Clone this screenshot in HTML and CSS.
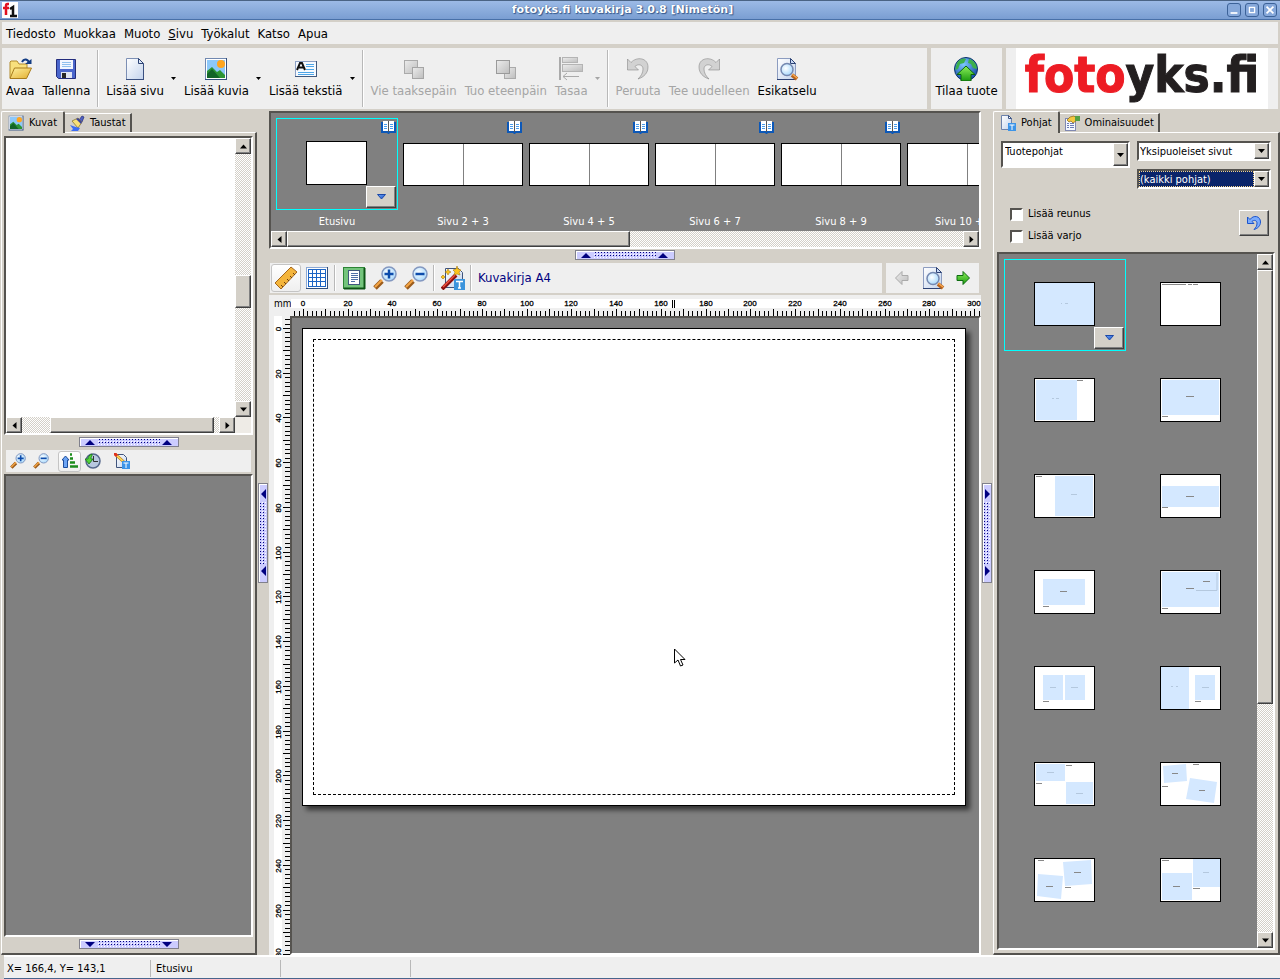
FILE: index.html
```html
<!DOCTYPE html>
<html lang="fi">
<head>
    <meta charset="UTF-8">
    <meta name="viewport" content="width=device-width, initial-scale=1.0">
    <title>fotoyks.fi kuvakirja 3.0.8 [Nimetön]</title>
    <link rel="stylesheet" href="styles.css">
</head>
<body>

    <!-- Icon set -->
    <svg class="defs" width="0" height="0" aria-hidden="true">
        <defs>
            <linearGradient id="g-blue" x1="0" y1="0" x2="1" y2="1"><stop offset="0" stop-color="#6ca8fc"/><stop offset="1" stop-color="#1c4cc0"/></linearGradient>
            <linearGradient id="g-page" x1="0" y1="0" x2="1" y2="1"><stop offset="0" stop-color="#ffffff"/><stop offset="1" stop-color="#c3d3ec"/></linearGradient>
            <linearGradient id="g-grey" x1="0" y1="0" x2="1" y2="1"><stop offset="0" stop-color="#ececec"/><stop offset="1" stop-color="#bdbdbd"/></linearGradient>
            <linearGradient id="g-green" x1="0" y1="0" x2="0" y2="1"><stop offset="0" stop-color="#8cf05a"/><stop offset="1" stop-color="#1c9a10"/></linearGradient>
            <linearGradient id="g-folder" x1="0" y1="0" x2="1" y2="1"><stop offset="0" stop-color="#fff2a0"/><stop offset="1" stop-color="#e2ae30"/></linearGradient>
            <radialGradient id="g-globe" cx=".4" cy=".3" r=".8"><stop offset="0" stop-color="#7cc8ff"/><stop offset="1" stop-color="#0a3c9c"/></radialGradient>
            <radialGradient id="g-lens" cx=".4" cy=".4" r=".7"><stop offset="0" stop-color="#ffffff"/><stop offset="1" stop-color="#9cd4fc"/></radialGradient>
            <pattern id="p-dots" width="3" height="3" patternUnits="userSpaceOnUse"><rect width="1" height="1" fill="#fff"/><rect x="1" y="1" width="1" height="1" fill="#000080"/></pattern>
        </defs>
        <symbol id="i-open" viewBox="0 0 24 24">
            <path d="M2 21V5l1-1h6l2 3h8v5" fill="#f8e07c" stroke="#b08a2c"/>
            <path d="M2 21.500l4.500-10.500h17l-5 10.500z" fill="url(#g-folder)" stroke="#a87c1c"/>
            <path d="M14 5c2-4 6-3 7 1" fill="none" stroke="#123c84" stroke-width="2"/>
            <path d="M17.500 5H24V0z" fill="#123c84" transform="translate(-.5 2)"/>
        </symbol>
        <symbol id="i-save" viewBox="0 0 24 24">
            <path d="M2.500 2.500h19v19h-17l-2-2z" fill="#4a66cc" stroke="#232c7c"/>
            <rect x="6" y="3" width="13" height="9" fill="#f2f6ff"/>
            <path d="M8 5.500h9M8 7.500h9M8 9.500h9" stroke="#8fc0ee"/>
            <rect x="7" y="15" width="11" height="6" fill="#dfe4f4"/>
            <rect x="8" y="16" width="4" height="5" fill="#262626"/>
        </symbol>
        <symbol id="i-page" viewBox="0 0 24 24">
            <path d="M3.500 1.500h12l5 5v16h-17z" fill="url(#g-page)" stroke="#7c8fb4"/>
            <path d="M15.500 1.500v5h5z" fill="#dce8fa" stroke="#2c4274"/>
            <path d="M3 22.500h18M20.500 7v16" stroke="#3a5080" stroke-width="1"/>
        </symbol>
        <symbol id="i-image" viewBox="0 0 24 24">
            <rect x="1.500" y="1.500" width="21" height="21" fill="#fff" stroke="#7088b0"/>
            <rect x="3" y="3" width="18" height="18" fill="#8cc8fa"/>
            <circle cx="17" cy="7" r="4" fill="#ffa51e"/>
            <path d="M3 14l5-4 5 5 3-2 5 5v3H3z" fill="#2c9434"/>
            <path d="M3 17l5-5 8 9H3z" fill="#126428"/>
            <path d="M1 22.500h22M22.500 1v22" stroke="#34507c"/>
        </symbol>
        <symbol id="i-text" viewBox="0 0 24 24">
            <rect x="1.500" y="4.500" width="21" height="15" fill="#f6faff" stroke="#8ca0c4"/>
            <path d="M3 13l3-7h2l3 7M5 10.500h5" fill="none" stroke="#111" stroke-width="2"/>
            <path d="M12 7.500h8M12 9.500h8M12 12.500h8M4 15.500h16M4 17.500h16" stroke="#4ea6e8"/>
            <path d="M1 19.500h22M22.500 4v16" stroke="#40587c"/>
        </symbol>
        <symbol id="i-back" viewBox="0 0 24 24">
            <rect x="2.500" y="3.500" width="13" height="13" fill="url(#g-grey)" stroke="#aaa"/>
            <rect x="10.500" y="10.500" width="11" height="11" fill="url(#g-grey)" stroke="#a5a5a5"/>
        </symbol>
        <symbol id="i-front" viewBox="0 0 24 24">
            <rect x="10.500" y="10.500" width="11" height="11" fill="url(#g-grey)" stroke="#aaa"/>
            <rect x="2.500" y="3.500" width="13" height="13" fill="url(#g-grey)" stroke="#9a9a9a"/>
        </symbol>
        <symbol id="i-align" viewBox="0 0 24 24">
            <path d="M1 0v23" stroke="#aaa" stroke-width="2"/>
            <rect x="3.500" y=".5" width="15" height="5" fill="url(#g-grey)" stroke="#b4b4b4"/>
            <rect x="3.500" y="7.500" width="20" height="7" fill="url(#g-grey)" stroke="#b4b4b4"/>
            <path d="M4 19.500h16M8 16l-4 3.500L8 23" fill="none" stroke="#aaa"/>
        </symbol>
        <symbol id="i-undo" viewBox="0 0 24 24">
            <path d="M1.500 2v11h11L9 9.500c3-3 8-2 8 2.500 0 4-2 7-5 10 6-2 10-6 10-12C22 1 11-1 5 5.500z" fill="currentColor" stroke="#777" stroke-opacity=".5"/>
        </symbol>
        <symbol id="i-reset" viewBox="0 0 16 16">
            <path d="M1.500 2v6.500H8L6 6.500c2-2 5-1 5 1.500 0 3-1 4.500-3 6.500 4-1 6.500-4 6.500-7.500C14.500 1 7.500-.5 4 4.500z" fill="#7cacfc" stroke="#1c54cc"/>
        </symbol>
        <symbol id="i-redo" viewBox="0 0 24 24">
            <path d="M22.500 2v11h-11L15 9.500c-3-3-8-2-8 2.500 0 4 2 7 5 10-6-2-10-6-10-12C2 1 13-1 19 5.500z" fill="currentColor" stroke="#777" stroke-opacity=".5"/>
        </symbol>
        <symbol id="i-preview" viewBox="0 0 24 24">
            <path d="M2.500 1.500h13l5 5v16h-18z" fill="url(#g-page)" stroke="#8c9cc0"/>
            <path d="M15.500 1.500v5h5z" fill="#c8d8f4" stroke="#2c4274"/>
            <path d="M2 22.500h18" stroke="#2c4274"/>
            <path d="M17 18l5 4" stroke="#b8641c" stroke-width="4"/>
            <path d="M17 17l5 4" stroke="#f8a850" stroke-width="1.500"/>
            <circle cx="12" cy="12.500" r="6" fill="url(#g-lens)" stroke="#7488b0" stroke-width="1.500"/>
        </symbol>
        <symbol id="i-globe" viewBox="0 0 24 24">
            <circle cx="12" cy="12" r="11.500" fill="url(#g-globe)" stroke="#083068"/>
            <path d="M3 6c3-5 8-5 9-4l-2 4-4 1-2 5-3 1zM15 2c5 1 8 6 8 10l-4-1-2-4-3-1z" fill="#3cb04c"/>
            <path d="M12 9l9 8.500h-4V24H7v-6.500H3z" fill="url(#g-green)" stroke="#0c640c"/>
        </symbol>
        <symbol id="i-brush" viewBox="0 0 16 16">
            <path d="M10 5l3-4 2 1-2 5z" fill="#5060c4" stroke="#222c74" stroke-width=".7"/>
            <path d="M3 6l6-3 4 4-4 6z" fill="#f8e078" stroke="#7c6c24" stroke-width=".7"/>
            <path d="M7 4l5 5 1-2-4-4z" fill="#3c449c"/>
            <path d="M1 10c3 1 5 2 10 3l-2 3H2l2-2z" fill="#3c6cf4"/>
        </symbol>
        <symbol id="i-template" viewBox="0 0 16 16">
            <path d="M1.500 .5h7l3 3v11h-10z" fill="url(#g-page)" stroke="#6c82ac"/>
            <path d="M8.500 .5v3h3z" fill="#fff" stroke="#3c5484"/>
            <rect x="8" y="8" width="8" height="8" fill="#3c94e8"/>
            <path d="M9.500 10h5M12 10v5" stroke="#fff"/>
        </symbol>
        <symbol id="i-props" viewBox="0 0 16 16">
            <rect x="1.500" y="3.500" width="10" height="12" fill="#f4f8ff" stroke="#8088b0"/>
            <path d="M3 8.500h2M3 10.500h2M3 12.500h2M6 8.500h4M6 10.500h4M6 12.500h4" stroke="#6c7cb4"/>
            <path d="M3 5l3-3 4-1 2 2v3L9 8 7 6 5 7z" fill="#f4c840" stroke="#866414" stroke-width=".7"/>
            <rect x="11" y="1" width="5" height="5" fill="#54a044"/>
        </symbol>
        <symbol id="i-book" viewBox="0 0 15 13">
            <path d="M0 1h15v11H9l-1 1H7l-1-1H0z" fill="#0c58b8"/>
            <path d="M2 0h5v10H2zM8 0h5v10H8z" fill="#fff"/>
            <path d="M7.500 0v11" stroke="#555"/>
            <path d="M3 3.500h3M3 5.500h3M3 7.500h3M9 3.500h3M9 5.500h3M9 7.500h3" stroke="#4a9cec"/>
        </symbol>
        <symbol id="i-ruler" viewBox="0 0 24 24">
            <path d="M1 17L17 1l6 5L7 23z" fill="#f4b53c" stroke="#a4661c"/>
            <path d="M9 21l-2-2M12 18l-2-2M15 15l-2-2M18 12l-2-2M21 9l-2-2" stroke="#6c4010"/>
        </symbol>
        <symbol id="i-grid" viewBox="0 0 24 24">
            <rect x="1.500" y="1.500" width="21" height="21" fill="#fff" stroke="#8ca8d4"/>
            <path d="M3 3.500h18M3 7.500h18M3 11.500h18M3 15.500h18M3 20.500h18M3.500 3v18M7.500 3v18M11.500 3v18M15.500 3v18M20.500 3v18" stroke="#1c64c4"/>
            <path d="M1 22.500h22M22.500 1v22" stroke="#34507c"/>
        </symbol>
        <symbol id="i-fit" viewBox="0 0 24 24">
            <rect x="1.500" y="1.500" width="21" height="21" fill="#74c47c" stroke="#2c8434"/>
            <path d="M2 22.500h21M22.500 2v21" stroke="#0c5414" stroke-width="2"/>
            <rect x="6.500" y="4.500" width="11" height="14" fill="#fff" stroke="#40587c"/>
            <path d="M9 7.500h7M9 9.500h7M9 11.500h7M9 13.500h7M9 15.500h4" stroke="#5070a8"/>
        </symbol>
        <symbol id="i-zoomin" viewBox="0 0 24 24">
            <path d="M9 15l-7 7" stroke="#9c5c1c" stroke-width="5"/>
            <path d="M9 14l-7 7" stroke="#f4a444" stroke-width="2"/>
            <circle cx="16" cy="8" r="7" fill="url(#g-lens)" stroke="#8498c0" stroke-width="1.500"/>
            <path d="M11.500 8h9M16 3.500v9" stroke="#0c4cac" stroke-width="2.500"/>
        </symbol>
        <symbol id="i-zoomout" viewBox="0 0 24 24">
            <path d="M9 15l-7 7" stroke="#9c5c1c" stroke-width="5"/>
            <path d="M9 14l-7 7" stroke="#f4a444" stroke-width="2"/>
            <circle cx="16" cy="8" r="7" fill="url(#g-lens)" stroke="#8498c0" stroke-width="1.500"/>
            <path d="M11.500 8h9" stroke="#0c4cac" stroke-width="2.500"/>
        </symbol>
        <symbol id="i-wand" viewBox="0 0 24 24">
            <path d="M4.500 2.500h13l4 4v15h-17z" fill="url(#g-page)" stroke="#40547c"/>
            <path d="M1 23L15 9" stroke="#8c1010" stroke-width="4"/>
            <path d="M2 21L14 9" stroke="#f05440" stroke-width="1.500"/>
            <path d="M16 0l1 3 3 1-2 2 1 3-3-1-3 1 1-3-2-2 3-1zM7 3l1 2 2 1-2 1-1 2-1-2-2-1 2-1zM2 9l1 1 1 1-2 2-2-2z" fill="#fcc41c" stroke="#a87c10" stroke-width=".6"/>
            <rect x="13" y="13" width="11" height="11" fill="#3c94dc"/>
            <path d="M15 15.500h7M18.500 15v7M17 22h3" stroke="#fff" stroke-width="1.500"/>
        </symbol>
        <symbol id="i-prev" viewBox="0 0 24 24">
            <path d="M5.500 12L12 5.500v4h6v5h-6v4z" fill="url(#g-grey)" stroke="#aaa"/>
        </symbol>
        <symbol id="i-next" viewBox="0 0 24 24">
            <path d="M18.500 12L12 5.500v4H6v5h6v4z" fill="url(#g-green)" stroke="#0c6c10"/>
        </symbol>
        <symbol id="i-sort" viewBox="0 0 16 16">
            <path d="M3.500 3L0 7h1.500v7.500h4V7H7z" fill="#6ca4f4" stroke="#1c4c9c"/>
            <path d="M8 1.500h2M8 5.500h3M8 9.500h5M8 13.500h8" stroke="#1c8c1c" stroke-width="2.500"/>
        </symbol>
        <symbol id="i-clock" viewBox="0 0 16 16">
            <circle cx="8" cy="8" r="7" fill="#b8c8e0" stroke="#56688c" stroke-width="1.500"/>
            <path d="M8.500 3v5.500H13" fill="none" stroke="#333"/>
            <path d="M7 1C4 2 3 4 3 6H0l4 5 4-5H6c0-1 0-2 1-3z" fill="#54d43c" stroke="#147414" stroke-width=".8"/>
        </symbol>
        <symbol id="i-edit" viewBox="0 0 16 16">
            <path d="M2.500 1.500h7l3 3v10h-10z" fill="url(#g-page)" stroke="#40547c"/>
            <path d="M1 1l10 9" stroke="#c88420" stroke-width="3"/>
            <path d="M1 1l10 9" stroke="#fce05c" stroke-width="1.500"/>
            <path d="M0 0l3 3" stroke="#e0301c" stroke-width="3"/>
            <rect x="8" y="8" width="8" height="8" fill="#3c94e8"/>
            <path d="M9.500 10h5M12 10v5" stroke="#fff"/>
        </symbol>
        <symbol id="i-down" viewBox="0 0 9 6">
            <path d="M.5 .5h8L4.500 5z" fill="url(#g-blue)" stroke="#1c48a8"/>
        </symbol>
        <symbol id="i-drop" viewBox="0 0 5 3"><path d="M0 0h5L2.500 3z" fill="currentColor"/></symbol>
        <symbol id="a-up" viewBox="0 0 7 4"><path d="M0 4h7L3.500 0z"/></symbol>
        <symbol id="a-down" viewBox="0 0 7 4"><path d="M0 0h7L3.500 4z"/></symbol>
        <symbol id="a-left" viewBox="0 0 4 7"><path d="M4 0v7L0 3.500z"/></symbol>
        <symbol id="a-right" viewBox="0 0 4 7"><path d="M0 0v7l4-3.500z"/></symbol>
        <symbol id="h-up" viewBox="0 0 98 8">
            <path d="M5 7h10L10 2zM82 7h10L87 2z" fill="#000080"/><rect x="18" y="1" width="62" height="6" fill="url(#p-dots)"/>
        </symbol>
        <symbol id="h-down" viewBox="0 0 98 8">
            <path d="M5 2h10L10 7zM82 2h10L87 7z" fill="#000080"/><rect x="18" y="1" width="62" height="6" fill="url(#p-dots)"/>
        </symbol>
        <symbol id="h-left" viewBox="0 0 8 98">
            <path d="M7 5v10L2 10zM7 82v10L2 87z" fill="#000080"/><rect x="1" y="18" width="6" height="62" fill="url(#p-dots)"/>
        </symbol>
        <symbol id="h-right" viewBox="0 0 8 98">
            <path d="M2 5v10l5-5zM2 82v10l5-5z" fill="#000080"/><rect x="1" y="18" width="6" height="62" fill="url(#p-dots)"/>
        </symbol>
    </svg>

    <!-- Title bar -->
    <header class="titlebar">
        <svg class="app-icon" viewBox="0 0 16 16">
            <rect width="16" height="16" fill="#fff"/>
            <path d="M7 2H5.500Q4 2 4 4v9M1 6h6" fill="none" stroke="#e01020" stroke-width="2.500"/>
            <path d="M8 7l3-2v9M8 14h7" fill="none" stroke="#111" stroke-width="2.500"/>
        </svg>
        <h1>fotoyks.fi kuvakirja 3.0.8 [Nimetön]</h1>
        <div class="window-buttons">
            <button aria-label="Pienennä"><svg viewBox="0 0 14 14"><path d="M3 10.500h8" stroke="#fff" stroke-width="2"/></svg></button>
            <button aria-label="Suurenna"><svg viewBox="0 0 14 14"><rect x="4" y="4" width="6" height="6" fill="none" stroke="#fff" stroke-width="1.500"/></svg></button>
            <button aria-label="Sulje"><svg viewBox="0 0 14 14"><path d="M3 3l8 8M11 3l-8 8" stroke="#fff" stroke-width="2"/></svg></button>
        </div>
    </header>

    <!-- Menu -->
    <nav class="menubar">
        <button>Tiedosto</button>
        <button>Muokkaa</button>
        <button>Muoto</button>
        <button><u>S</u>ivu</button>
        <button>Työkalut</button>
        <button>Katso</button>
        <button>Apua</button>
    </nav>

    <!-- Main toolbar -->
    <div class="toolbar-row">
        <div class="toolbar main-tools">
            <button class="tool"><svg><use href="#i-open"/></svg>Avaa</button>
            <button class="tool"><svg><use href="#i-save"/></svg>Tallenna</button>
            <span class="sep"></span>
            <button class="tool"><svg><use href="#i-page"/></svg>Lisää sivu</button>
            <button class="drop" aria-label="Lisää sivu, valikko"><svg><use href="#i-drop"/></svg></button>
            <button class="tool"><svg><use href="#i-image"/></svg>Lisää kuvia</button>
            <button class="drop" aria-label="Lisää kuvia, valikko"><svg><use href="#i-drop"/></svg></button>
            <button class="tool"><svg><use href="#i-text"/></svg>Lisää tekstiä</button>
            <button class="drop" aria-label="Lisää tekstiä, valikko"><svg><use href="#i-drop"/></svg></button>
            <span class="sep"></span>
            <button class="tool" disabled><svg><use href="#i-back"/></svg>Vie taaksepäin</button>
            <button class="tool" disabled><svg><use href="#i-front"/></svg>Tuo eteenpäin</button>
            <button class="tool" disabled><svg><use href="#i-align"/></svg>Tasaa</button>
            <button class="drop" disabled aria-label="Tasaa, valikko"><svg><use href="#i-drop"/></svg></button>
            <span class="sep"></span>
            <button class="tool" disabled><svg><use href="#i-undo"/></svg>Peruuta</button>
            <button class="tool" disabled><svg><use href="#i-redo"/></svg>Tee uudelleen</button>
            <button class="tool"><svg><use href="#i-preview"/></svg>Esikatselu</button>
        </div>
        <div class="toolbar order">
            <button class="tool"><svg><use href="#i-globe"/></svg>Tilaa tuote</button>
        </div>
        <div class="toolbar brand">
            <div class="logo"><span>foto</span>yks.fi</div>
        </div>
    </div>

    <main class="workspace">

        <!-- Left: pictures -->
        <aside class="left">
            <div class="tabs">
                <button class="tab active"><svg><use href="#i-image"/></svg>Kuvat</button>
                <button class="tab"><svg><use href="#i-brush"/></svg>Taustat</button>
            </div>
            <div class="tab-page">
                <div class="sunken folder-list">
                    <div class="folder-body"></div>
                    <div class="scroll vertical">
                        <button aria-label="Ylös"><svg><use href="#a-up"/></svg></button>
                        <span class="track folders-before"></span><span class="thumb folders-thumb"></span><span class="track"></span>
                        <button aria-label="Alas"><svg><use href="#a-down"/></svg></button>
                    </div>
                    <div class="scroll">
                        <button aria-label="Vasemmalle"><svg><use href="#a-left"/></svg></button>
                        <span class="track path-before"></span><span class="thumb path-thumb"></span><span class="track"></span>
                        <button aria-label="Oikealle"><svg><use href="#a-right"/></svg></button>
                    </div>
                    <div class="corner"></div>
                </div>
                <button class="handle" aria-label="Piilota kansiot"><svg><use href="#h-up"/></svg></button>
                <div class="small-tools">
                    <button aria-label="Suurenna"><svg><use href="#i-zoomin"/></svg></button>
                    <button aria-label="Pienennä"><svg><use href="#i-zoomout"/></svg></button>
                    <span class="space"></span>
                    <button class="pressed" aria-label="Järjestä nimen mukaan"><svg><use href="#i-sort"/></svg></button>
                    <button aria-label="Järjestä ajan mukaan"><svg><use href="#i-clock"/></svg></button>
                    <span class="space"></span>
                    <button aria-label="Muokkaa"><svg><use href="#i-edit"/></svg></button>
                </div>
                <div class="sunken image-list"></div>
                <button class="handle" aria-label="Piilota kuvat"><svg><use href="#h-down"/></svg></button>
            </div>
        </aside>

        <div class="splitter"><button class="handle upright" aria-label="Piilota vasen paneeli"><svg><use href="#h-left"/></svg></button></div>

        <!-- Center: pages and canvas -->
        <section class="center">
            <div class="sunken page-strip">
                <div class="pages">
                    <div class="page-item">
                        <div class="slot selected">
                            <svg class="book"><use href="#i-book"/></svg>
                            <span class="sheet single"></span>
                            <button class="more" aria-label="Sivun valikko"><svg><use href="#i-down"/></svg></button>
                        </div>
                        <p>Etusivu</p>
                    </div>
                    <div class="page-item">
                        <div class="slot"><svg class="book"><use href="#i-book"/></svg><span class="sheet spread"></span></div>
                        <p>Sivu 2 + 3</p>
                    </div>
                    <div class="page-item">
                        <div class="slot"><svg class="book"><use href="#i-book"/></svg><span class="sheet spread"></span></div>
                        <p>Sivu 4 + 5</p>
                    </div>
                    <div class="page-item">
                        <div class="slot"><svg class="book"><use href="#i-book"/></svg><span class="sheet spread"></span></div>
                        <p>Sivu 6 + 7</p>
                    </div>
                    <div class="page-item">
                        <div class="slot"><svg class="book"><use href="#i-book"/></svg><span class="sheet spread"></span></div>
                        <p>Sivu 8 + 9</p>
                    </div>
                    <div class="page-item">
                        <div class="slot"><svg class="book"><use href="#i-book"/></svg><span class="sheet spread"></span></div>
                        <p>Sivu 10 + 11</p>
                    </div>
                </div>
                <div class="scroll">
                    <button aria-label="Vasemmalle"><svg><use href="#a-left"/></svg></button>
                    <span class="thumb pages-thumb"></span><span class="track"></span>
                    <button aria-label="Oikealle"><svg><use href="#a-right"/></svg></button>
                </div>
            </div>
            <button class="handle" aria-label="Piilota sivut"><svg><use href="#h-up"/></svg></button>

            <div class="view-row">
                <div class="view-tools">
                    <button class="pressed" aria-label="Viivain"><svg><use href="#i-ruler"/></svg></button>
                    <button aria-label="Ruudukko"><svg><use href="#i-grid"/></svg></button>
                    <span class="sep"></span>
                    <button aria-label="Koko sivu"><svg><use href="#i-fit"/></svg></button>
                    <button aria-label="Lähennä"><svg><use href="#i-zoomin"/></svg></button>
                    <button aria-label="Loitonna"><svg><use href="#i-zoomout"/></svg></button>
                    <span class="sep"></span>
                    <button aria-label="Automaattinen taitto"><svg><use href="#i-wand"/></svg></button>
                    <span class="sep"></span>
                    <span class="product">Kuvakirja A4</span>
                </div>
                <div class="view-tools page-nav">
                    <button disabled aria-label="Edellinen sivu"><svg><use href="#i-prev"/></svg></button>
                    <button aria-label="Esikatselu"><svg><use href="#i-preview"/></svg></button>
                    <button aria-label="Seuraava sivu"><svg><use href="#i-next"/></svg></button>
                </div>
            </div>

            <div class="editor">
                <div class="unit">mm</div>
                <svg class="ruler" id="ruler-x"></svg>
                <svg class="ruler" id="ruler-y"></svg>
                <div class="canvas">
                    <div class="paper">
                        <div class="margin"></div>
                        <svg class="cursor" viewBox="0 0 12 19"><path d="M.5 1v14l3.500-3 2.500 6 2.500-1-2.500-5.500h4.500z" fill="#fff" stroke="#000"/></svg>
                    </div>
                </div>
            </div>
        </section>

        <div class="splitter"><button class="handle upright" aria-label="Piilota oikea paneeli"><svg><use href="#h-right"/></svg></button></div>

        <!-- Right: templates -->
        <aside class="right">
            <div class="tabs">
                <button class="tab active"><svg><use href="#i-template"/></svg>Pohjat</button>
                <button class="tab"><svg><use href="#i-props"/></svg>Ominaisuudet</button>
            </div>
            <div class="tab-page">
                <div class="filters">
                    <div class="combo tall">
                        <select aria-label="Pohjaryhmä"><option>Tuotepohjat</option></select>
                        <span class="combo-arrow"><svg><use href="#a-down"/></svg></span>
                    </div>
                    <div class="combo-stack">
                        <div class="combo">
                            <select aria-label="Sivutyyppi"><option>Yksipuoleiset sivut</option></select>
                            <span class="combo-arrow"><svg><use href="#a-down"/></svg></span>
                        </div>
                        <div class="combo current">
                            <select aria-label="Pohjat"><option>(kaikki pohjat)</option></select>
                            <span class="combo-arrow"><svg><use href="#a-down"/></svg></span>
                        </div>
                    </div>
                </div>
                <div class="options">
                    <div>
                        <label><input type="checkbox">Lisää reunus</label>
                        <label><input type="checkbox">Lisää varjo</label>
                    </div>
                    <button class="reset" aria-label="Palauta"><svg><use href="#i-reset"/></svg></button>
                </div>
                <div class="sunken template-list">
                    <div class="templates">
                        <div class="slot selected">
                            <svg class="tpl" viewBox="0 0 59 42"><rect class="pic" width="59" height="42"/><path class="faint" d="M26 20.500h1M30 20.500h3"/></svg>
                            <button class="more" aria-label="Pohjan valikko"><svg><use href="#i-down"/></svg></button>
                        </div>
                        <div class="slot"><svg class="tpl" viewBox="0 0 59 42"><path class="txt" d="M1 1.500h24M27 1.500h4M32 1.500h5"/></svg></div>
                        <div class="slot"><svg class="tpl" viewBox="0 0 59 42"><rect class="pic" x="1" y="1" width="41" height="40"/><path class="txt" d="M42 1.500h6"/><path class="faint" d="M17 19.500h2M21 19.500h3"/></svg></div>
                        <div class="slot"><svg class="tpl" viewBox="0 0 59 42"><rect class="pic" x="1" y="1" width="57" height="35"/><path class="txt" d="M25 17.500h8M1 37.500h6"/></svg></div>
                        <div class="slot"><svg class="tpl" viewBox="0 0 59 42"><rect class="pic" x="20" y="1" width="38" height="40"/><path class="txt" d="M1 1.500h6"/><path class="faint" d="M36 19.500h6"/></svg></div>
                        <div class="slot"><svg class="tpl" viewBox="0 0 59 42"><rect class="pic" x="1" y="11" width="57" height="21"/><path class="txt" d="M25 21.500h8M1 32.500h6"/></svg></div>
                        <div class="slot"><svg class="tpl" viewBox="0 0 59 42"><rect class="pic" x="8" y="8" width="42" height="26"/><path class="txt" d="M25 20.500h7M8 35.500h6"/></svg></div>
                        <div class="slot"><svg class="tpl" viewBox="0 0 59 42"><rect class="pic" x="1" y="1" width="57" height="35"/><path class="faint" d="M35 19.500h21V2"/><path class="txt" d="M25 17.500h8M42 10.500h7M1 37.500h6"/></svg></div>
                        <div class="slot"><svg class="tpl" viewBox="0 0 59 42"><rect class="pic" x="8" y="8" width="20" height="25"/><rect class="pic" x="30" y="8" width="20" height="25"/><path class="faint" d="M15 20.500h6M36 20.500h7"/><path class="txt" d="M8 34.500h6"/></svg></div>
                        <div class="slot"><svg class="tpl" viewBox="0 0 59 42"><rect class="pic" width="28" height="42"/><rect class="pic" x="34" y="8" width="20" height="25"/><path class="faint" d="M10 19.500h2M15 19.500h2M41 20.500h7"/><path class="txt" d="M34 34.500h6"/></svg></div>
                        <div class="slot"><svg class="tpl" viewBox="0 0 59 42"><rect class="pic" x="1" y="1" width="29" height="17"/><rect class="pic" x="31" y="19" width="27" height="22"/><path class="faint" d="M12 9.500h7M41 30.500h7"/><path class="txt" d="M31 2.500h6M1 20.500h6"/></svg></div>
                        <div class="slot"><svg class="tpl" viewBox="0 0 59 42"><path class="pic" d="M2 3l23-2 1 17-23 2zM29 15l27 4-3 21-28-4z"/><path class="txt" d="M32 1.500h6M11 10.500h6M1 23.500h6M38 27.500h6"/></svg></div>
                        <div class="slot"><svg class="tpl" viewBox="0 0 59 42"><path class="pic" d="M28 3l28-2 1 24-27 2zM3 15l25 2-2 23-24-3z"/><path class="txt" d="M3 1.500h6M39 13.500h7M11 27.500h7M30 28.500h6"/></svg></div>
                        <div class="slot"><svg class="tpl" viewBox="0 0 59 42"><rect class="pic" x="1" y="14" width="30" height="27"/><rect class="pic" x="32" width="27" height="28"/><path class="faint" d="M42 13.500h6"/><path class="txt" d="M1 1.500h7M12 27.500h7M32 29.500h7"/></svg></div>
                    </div>
                    <div class="scroll vertical">
                        <button aria-label="Ylös"><svg><use href="#a-up"/></svg></button>
                        <span class="thumb templates-thumb"></span><span class="track"></span>
                        <button aria-label="Alas"><svg><use href="#a-down"/></svg></button>
                    </div>
                </div>
            </div>
        </aside>
    </main>

    <!-- Status bar -->
    <footer class="statusbar">
        <span class="cell wide">X= 166,4, Y= 143,1</span>
        <span class="cell">Etusivu</span>
        <span class="cell"></span>
        <span class="rest"></span>
    </footer>

    <script src="rulers.js"></script>
</body>
</html>
```

FILE: styles.css
```css
* {
    box-sizing: border-box;
}

body {
    margin: 0;
    height: 100vh;
    display: flex;
    flex-direction: column;
    overflow: hidden;
    background-color: #d4d0c8;
    color: #000;
    font-family: "DejaVu Sans Condensed", "DejaVu Sans", sans-serif;
    font-stretch: condensed;
    font-size: 11px;
    line-height: 14px;
}

button, select, input {
    font: inherit;
    color: inherit;
    margin: 0;
}

button {
    padding: 0;
    border: 0;
    background: none;
    display: flex;
    align-items: center;
    justify-content: center;
}

svg {
    display: block;
    flex: none;
}

.defs {
    position: absolute;
}

/* Title bar */
.titlebar {
    height: 20px;
    flex: none;
    display: flex;
    align-items: center;
    padding: 0 3px 0 2px;
    border-top: 1px solid #4a6384;
    border-bottom: 1px solid #4870a8;
    background: linear-gradient(#9cbae6, #7a9ed2);
}

.app-icon {
    width: 16px;
    height: 16px;
}

.titlebar h1 {
    flex: 1;
    margin: 0;
    text-align: center;
    color: #fff;
    font-family: "DejaVu Sans", sans-serif;
    font-stretch: normal;
    font-size: 11px;
    font-weight: bold;
    text-shadow: 0 0 1px #34588c, 1px 1px 1px #34588c;
}

.window-buttons {
    display: flex;
    gap: 4px;
}

.window-buttons button {
    width: 14px;
    height: 14px;
    border: 1px solid #3c6298;
    border-radius: 3px;
    background-color: #86a8da;
}

.window-buttons svg {
    width: 12px;
    height: 12px;
}

/* Menu */
.menubar {
    flex: none;
    display: flex;
    height: 22px;
    margin: 2px 2px 4px;
    padding-top: 1px;
    background-color: #efefef;
}

.menubar button {
    padding: 0 4px;
    font-size: 13px;
}

/* Toolbars */
.toolbar-row {
    flex: none;
    display: flex;
    gap: 4px;
    height: 61px;
    margin: 0 2px 2px;
}

.toolbar {
    display: flex;
    align-items: stretch;
    background-color: #efefef;
}

.main-tools {
    flex: 1;
}

.order {
    width: 71px;
    justify-content: center;
}

.tool {
    flex-direction: column;
    justify-content: flex-start;
    padding: 9px 4px 0;
    gap: 3px;
    font-size: 13px;
    white-space: nowrap;
}

.tool svg {
    width: 24px;
    height: 24px;
}

.tool:disabled, .drop:disabled {
    color: #a5a5a5;
}

.tool:disabled svg {
    color: #d2d2d2;
}

.drop {
    width: 12px;
}

.drop svg {
    width: 5px;
    height: 3px;
}

.sep {
    width: 2px;
    flex: none;
    margin: 2px 3px;
    border-left: 1px solid #b8b8b8;
    border-right: 1px solid #fff;
}

.brand {
    width: 272px;
    padding: 0 10px;
}

.logo {
    flex: 1;
    background-color: #fff;
    color: #231f20;
    text-align: center;
    font-size: 49px;
    font-weight: bold;
    line-height: 56px;
    white-space: nowrap;
    -webkit-text-stroke: 1px;
}

.logo span {
    color: #ed1c24;
}

/* Workspace */
.workspace {
    flex: 1;
    min-height: 0;
    display: flex;
}

.left, .right, .center {
    display: flex;
    flex-direction: column;
    min-width: 0;
    min-height: 0;
}

.left {
    width: 256px;
    flex: none;
    margin-left: 1px;
}

.right {
    width: 287px;
    flex: none;
}

.center {
    flex: 1;
}

.splitter {
    width: 12px;
    flex: none;
    display: flex;
    align-items: center;
    justify-content: center;
}

/* Tabs */
.tabs {
    display: flex;
    align-items: flex-end;
    height: 22px;
    flex: none;
}

.tab {
    height: 19px;
    gap: 5px;
    padding: 0 4px;
    margin-bottom: 1px;
    border-top: 1px solid #fff;
    border-right: 2px solid #55534f;
}

.tab.active {
    height: 22px;
    padding: 0 6px;
    margin-bottom: 0;
    border-left: 1px solid #fff;
    border-radius: 2px 2px 0 0;
    background-color: #d4d0c8;
    z-index: 1;
}

.tab svg {
    width: 16px;
    height: 16px;
}

.tab-page {
    flex: 1;
    min-height: 0;
    display: flex;
    flex-direction: column;
    margin-top: -1px;
    padding: 3px 2px 4px;
    border: solid;
    border-width: 1px 2px 2px 1px;
    border-color: #fff #55534f #55534f #fff;
}

.sunken {
    border: 2px solid;
    border-color: #55534f #fff #fff #55534f;
    background-color: #808080;
}

/* Scroll bars */
.scroll {
    display: flex;
    height: 16px;
}

.scroll.vertical {
    flex-direction: column;
    width: 16px;
    height: auto;
}

.scroll button, .thumb, .combo-arrow, .more, .reset {
    border: 1px solid;
    border-color: #fff #404040 #404040 #fff;
    box-shadow: inset -1px -1px #808080;
    background-color: #d4d0c8;
}

.scroll button {
    width: 16px;
    height: 16px;
    flex: none;
}

.scroll button svg {
    width: 7px;
    height: 7px;
}

.track {
    flex: 1;
    background: conic-gradient(#fff 25%, #d4d0c8 0 50%, #fff 0 75%, #d4d0c8 0) 0 0 / 2px 2px;
}

/* Folder list */
.folder-list {
    flex: none;
    height: 299px;
    display: grid;
    grid-template: 1fr 16px / 1fr 16px;
}

.folder-body {
    background-color: #fff;
}

.corner {
    background-color: #eeebe6;
}

.folders-before {
    flex: none;
    height: 121px;
}

.folders-thumb {
    height: 33px;
}

.path-before {
    flex: none;
    width: 28px;
}

.path-thumb {
    width: 164px;
}

.image-list {
    flex: 1;
    margin-bottom: 2px;
}

/* Splitter handles */
.handle {
    width: 100px;
    height: 10px;
    flex: none;
    align-self: center;
    border: 1px solid #80808c;
    background-color: #ccccff;
    box-shadow: inset 1px 1px #fff;
}

.handle svg {
    width: 98px;
    height: 8px;
}

.handle.upright {
    width: 10px;
    height: 100px;
}

.handle.upright svg {
    width: 8px;
    height: 98px;
}

.folder-list + .handle {
    margin: 2px 0 3px;
}

/* Small toolbar */
.small-tools {
    display: flex;
    align-items: center;
    height: 22px;
    flex: none;
    margin: 0 2px 2px;
    background-color: #efefef;
}

.small-tools button {
    width: 23px;
    height: 21px;
}

.small-tools svg {
    width: 16px;
    height: 16px;
}

.small-tools .space {
    width: 6px;
}

.small-tools .pressed, .view-tools .pressed {
    border: 1px solid #c4c4c4;
    border-radius: 3px;
    background: linear-gradient(#fff, #efefef);
}

/* Page strip */
.page-strip {
    flex: none;
    display: flex;
    flex-direction: column;
}

.pages {
    display: flex;
    gap: 4px;
    height: 118px;
    padding: 5px;
    overflow: hidden;
    color: #fff;
}

.page-item {
    flex: none;
}

.page-item p {
    margin: 5px 0 0;
    text-align: center;
}

.slot {
    position: relative;
    width: 122px;
    height: 92px;
    display: flex;
    align-items: center;
    justify-content: center;
    border: 1px solid transparent;
}

.slot.selected {
    border-color: #00ffff;
}

.book {
    position: absolute;
    top: 2px;
    right: 1px;
    width: 15px;
    height: 13px;
}

.sheet {
    border: 1px solid #000;
    background-color: #fff;
}

.single {
    width: 61px;
    height: 44px;
}

.single, .tpl {
    margin: 0 1px 2px 0;
}

.spread {
    width: 120px;
    height: 43px;
    background: linear-gradient(#808080, #808080) center / 1px 100% no-repeat #fff;
}

.more {
    position: absolute;
    right: 1px;
    bottom: 1px;
    width: 30px;
    height: 22px;
}

.more svg {
    width: 9px;
    height: 6px;
}

.pages-thumb {
    width: 343px;
}

.page-strip + .handle {
    margin: 1px 0 3px;
}

/* View toolbar */
.view-row {
    display: flex;
    gap: 4px;
    flex: none;
    height: 30px;
    margin: 0 2px 2px 1px;
}

.view-tools {
    display: flex;
    align-items: center;
    flex: 1;
    gap: 1px;
    padding: 0 1px;
    background-color: #efefef;
}

.view-tools button {
    width: 30px;
    height: 28px;
}

.view-tools button svg {
    width: 24px;
    height: 24px;
}

.view-tools .sep {
    align-self: stretch;
    margin: 2px 2px 2px 1px;
}

.page-nav {
    flex: none;
    width: 93px;
}

.product {
    padding-left: 3px;
    color: #000080;
    font-size: 13px;
}

/* Rulers and canvas */
.editor {
    flex: 1;
    min-height: 0;
    display: grid;
    grid-template: 21px 1fr / 21px 1fr;
    background-color: #efefef;
}

.unit {
    padding: 2px 0 0 5px;
    font-size: 10px;
}

.ruler {
    width: 100%;
    height: 100%;
    overflow: hidden;
    font-family: "Liberation Sans", sans-serif;
    font-size: 8px;
}

.ruler text {
    stroke: #000;
    stroke-width: 0.3px;
}

.canvas {
    min-width: 0;
    padding: 10px 13px 10px 10px;
    overflow: hidden;
    border: 2px solid;
    border-color: #55534f #fff #fff #55534f;
    background-color: #808080;
}

.paper {
    position: relative;
    aspect-ratio: 664 / 478;
    padding: 10px;
    border: 1px solid #000;
    background-color: #fff;
    box-shadow: 4px 4px 5px rgba(0, 0, 0, 0.6);
}

.margin {
    height: 100%;
    border: 1px dashed #000;
}

.cursor {
    position: absolute;
    left: 56%;
    top: 67%;
    width: 12px;
    height: 19px;
}

/* Template filters */
.filters {
    display: flex;
    gap: 7px;
    padding: 5px 4px 0;
}

.combo {
    display: flex;
    height: 20px;
    border: 2px solid;
    border-color: #55534f #fff #fff #55534f;
    background-color: #fff;
}

.combo.tall {
    width: 129px;
    height: 27px;
}

.combo-stack {
    flex: 1;
    display: flex;
    flex-direction: column;
    gap: 8px;
}

.combo select {
    flex: 1;
    min-width: 0;
    appearance: none;
    border: 0;
    padding: 2px 1px 0;
    background: none;
    outline: none;
}

.combo.tall select {
    padding: 0 2px 5px;
}

.combo.current select {
    border: 1px dotted #f4d48c;
    padding: 1px 0 0;
    background-color: #0a246a;
    color: #fff;
}

.combo-arrow {
    width: 15px;
    display: flex;
    align-items: center;
    justify-content: center;
}

.combo-arrow svg {
    width: 7px;
    height: 4px;
}

.options {
    display: flex;
    justify-content: space-between;
    align-items: center;
    margin: 14px 6px 5px 13px;
}

.options label {
    display: flex;
    align-items: center;
    gap: 5px;
    height: 22px;
}

.options input {
    appearance: none;
    width: 13px;
    height: 13px;
    border: 2px solid;
    border-color: #55534f #fff #fff #55534f;
    background-color: #fff;
}

.reset {
    width: 30px;
    height: 26px;
    margin-bottom: 4px;
}

.reset svg {
    width: 16px;
    height: 16px;
}

/* Template list */
.right .tab-page {
    padding: 3px;
}

.template-list {
    flex: 1;
    min-height: 0;
    display: flex;
}

.templates {
    flex: 1;
    display: grid;
    grid-template-columns: 122px 122px;
    grid-auto-rows: 92px;
    gap: 4px;
    padding: 5px;
    overflow: hidden;
}

.tpl {
    width: 61px;
    height: 44px;
    border: 1px solid #000;
    background-color: #fff;
}

.pic {
    fill: #d4e8ff;
}

.txt {
    stroke: #888;
}

.faint {
    stroke: #b4c8de;
    fill: none;
}

.templates-thumb {
    height: 434px;
}

/* Status bar */
.statusbar {
    flex: none;
    display: flex;
    height: 24px;
    padding: 3px 0 1px;
    margin-left: 4px;
    border-top: 2px solid #fff;
    border-bottom: 1px solid #48648c;
    background-color: #efefef;
}

.cell {
    width: 130px;
    padding: 2px 5px;
    border-right: 1px solid #b8b8b8;
}

.cell.wide {
    width: 147px;
    padding: 2px 3px;
}
```

FILE: rulers.js
```js
const PX_PER_MM = 2.237;
const NS = "http://www.w3.org/2000/svg";

function add(parent, name, attrs, text) {
    const el = document.createElementNS(NS, name);
    for (const key in attrs) {
        el.setAttribute(key, attrs[key]);
    }
    if (text !== undefined) {
        el.textContent = text;
    }
    parent.appendChild(el);
}

// Horizontal ruler, zero is at the left edge of the paper
function drawRulerX(svg, zero) {
    const width = svg.getBoundingClientRect().width;
    add(svg, "rect", { x: 1, y: 4, width: "100%", height: 9, fill: "#fff" });
    for (let mm = -4; zero + mm * PX_PER_MM < width; mm += 2) {
        const x = Math.round(zero + mm * PX_PER_MM);
        const top = mm % 10 === 0 ? 14 : 16;
        add(svg, "rect", { x: x, y: top, width: 1, height: 21 - top });
        if (mm >= 0 && mm % 20 === 0) {
            add(svg, "text", { x: x, y: 11, "text-anchor": "middle" }, mm);
        }
    }
    // pointer position
    add(svg, "path", { d: "M382.5 5v8M384.5 5v8", stroke: "#000" });
}

// Vertical ruler, zero is at the top edge of the paper
function drawRulerY(svg, zero) {
    const height = svg.getBoundingClientRect().height;
    add(svg, "rect", { x: 5, y: 0, width: 8, height: "100%", fill: "#fff" });
    for (let mm = -4; zero + mm * PX_PER_MM < height; mm += 2) {
        const y = Math.round(zero + mm * PX_PER_MM);
        const left = mm % 10 === 0 ? 14 : 16;
        add(svg, "rect", { x: left, y: y, width: 21 - left, height: 1 });
        if (mm >= 0 && mm % 20 === 0) {
            add(svg, "text", { "text-anchor": "middle", transform: "translate(12 " + (y + 1) + ") rotate(-90)" }, mm);
        }
    }
}

drawRulerX(document.getElementById("ruler-x"), 13);
drawRulerY(document.getElementById("ruler-y"), 12);
```
